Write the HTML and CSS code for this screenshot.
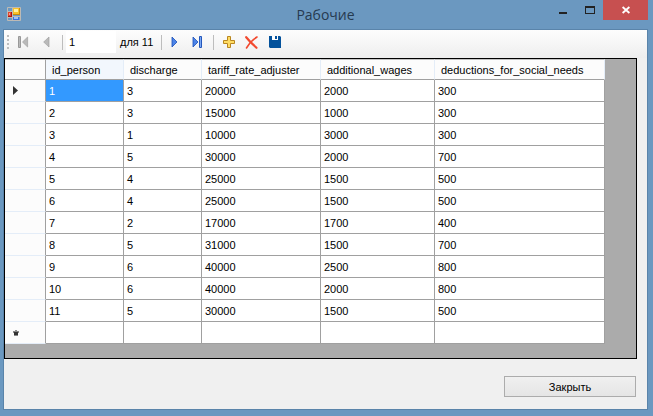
FILE: index.html
```html
<!DOCTYPE html>
<html lang="ru">
<head>
<meta charset="utf-8">
<title>Рабочие</title>
<link rel="stylesheet" href="styles.css">
</head>
<body>
<div class="window">
  <header class="titlebar">
    <svg class="app-icon" width="14" height="14" viewBox="0 0 14 14" aria-hidden="true">
      <path fill="none" stroke="#bdbab5" d="M.5.5h13v13H.5zM5.5 0v14M0 4.5h5M0 10.5h5M5 9.5h9"/>
      <path fill="#a81212" d="M1 5h4v5H1z"/><path fill="#e2452f" d="M1 5h3v4H1z"/><path fill="#f3a090" d="M2 6h1v2H2z"/>
      <path fill="#c98a0c" d="M6 1h7v7H6z"/><path fill="#f9c22a" d="M6 1h6v6H6z"/><path fill="#fff0a0" d="M7 2h4v3H7z"/>
      <path fill="#3a70dc" d="M6 10h6v3H6z"/><path fill="#9cc0fa" d="M7 10h4v2H7z"/>
    </svg>
    <h1 class="title">Рабочие</h1>
    <div class="window-controls">
      <button class="control" type="button" aria-label="Свернуть"><svg width="10" height="8" viewBox="0 0 10 8"><path fill="#222" d="M1 6h8v2H1z"/></svg></button>
      <button class="control" type="button" aria-label="Развернуть"><svg width="10" height="8" viewBox="0 0 10 8"><path fill="#222" fill-rule="evenodd" d="M0 0h10v8H0zM1 2v5h8V2z"/></svg></button>
      <button class="control control-close" type="button" aria-label="Закрыть окно"><svg width="8" height="8" viewBox="0 0 8 8"><path stroke="#fff" stroke-width="1.8" d="M.6 1l6.8 6M7.4 1L.6 7"/></svg></button>
    </div>
  </header>
  <main class="client">
    <div class="toolbar" role="toolbar" aria-label="Навигация">
      <span class="grip"></span>
      <button class="tool" type="button" aria-label="Первая"><svg width="11" height="12" viewBox="0 0 11 12"><path fill="#b9b9b9" stroke="#999" d="M.5.5h2v11h-2z"/><path fill="#b9b9b9" stroke="#a0a0a0" stroke-width=".7" d="M9.6 1v10L4.5 6z"/></svg></button>
      <button class="tool" type="button" aria-label="Предыдущая"><svg width="7" height="12" viewBox="0 0 7 12"><path fill="#b9b9b9" stroke="#a0a0a0" stroke-width=".7" d="M6 1v10L.7 6z"/></svg></button>
      <span class="separator"></span>
      <input class="position" type="text" value="1" aria-label="Текущая запись">
      <span class="count">для 11</span>
      <span class="separator separator-tight"></span>
      <button class="tool" type="button" aria-label="Следующая"><svg width="7" height="12" viewBox="0 0 7 12"><path fill="#4c84e8" stroke="#1b4fb8" stroke-width=".8" d="M1 1v10l5-5z"/></svg></button>
      <button class="tool" type="button" aria-label="Последняя"><svg width="11" height="12" viewBox="0 0 11 12"><path fill="#4c84e8" stroke="#1b4fb8" stroke-width=".8" d="M1 1v10l5-5z"/><path fill="#7aa8f5" stroke="#2457bb" d="M7.5.5h2v11h-2z"/></svg></button>
      <span class="separator"></span>
      <button class="tool" type="button" aria-label="Добавить"><svg width="12" height="12" viewBox="0 0 12 12"><path fill="#ffdc63" stroke="#b9861f" d="M4.5.5h3v4h4v3h-4v4h-3v-4h-4v-3h4z"/></svg></button>
      <button class="tool" type="button" aria-label="Удалить"><svg width="13" height="13" viewBox="0 0 13 13"><path fill="none" stroke="#f24a30" stroke-width="2.2" stroke-linecap="round" d="M1.2 1.2Q5 6 11.5 11.8"/><path fill="none" stroke="#f24a30" stroke-width="1.6" stroke-linecap="round" d="M12 1Q5.500 5 1.500 12"/></svg></button>
      <button class="tool" type="button" aria-label="Сохранить"><svg width="12" height="12" viewBox="0 0 12 12"><path fill="#04529c" d="M0 0h11l1 1v11H1l-1-1z"/><path fill="#fff" d="M3 0h6v4H3z"/><path fill="#04529c" d="M6 0h2v3H6z"/></svg></button>
    </div>
    <div class="grid-panel">
      <table class="grid">
        <colgroup><col class="c-head"><col class="c-id"><col class="c-id"><col class="c-rate"><col class="c-wages"><col class="c-deductions"></colgroup>
        <thead>
          <tr><td></td><th class="current" scope="col">id_person</th><th scope="col">discharge</th><th scope="col">tariff_rate_adjuster</th><th scope="col">additional_wages</th><th scope="col">deductions_for_social_needs</th></tr>
        </thead>
        <tbody>
          <tr><td class="marker"><svg width="5" height="9" viewBox="0 0 5 9"><path fill="#333" d="M0 0l5 4.500L0 9z"/></svg></td><td class="selected">1</td><td>3</td><td>20000</td><td>2000</td><td>300</td></tr>
          <tr><td class="marker"></td><td>2</td><td>3</td><td>15000</td><td>1000</td><td>300</td></tr>
          <tr><td class="marker"></td><td>3</td><td>1</td><td>10000</td><td>3000</td><td>300</td></tr>
          <tr><td class="marker"></td><td>4</td><td>5</td><td>30000</td><td>2000</td><td>700</td></tr>
          <tr><td class="marker"></td><td>5</td><td>4</td><td>25000</td><td>1500</td><td>500</td></tr>
          <tr><td class="marker"></td><td>6</td><td>4</td><td>25000</td><td>1500</td><td>500</td></tr>
          <tr><td class="marker"></td><td>7</td><td>2</td><td>17000</td><td>1700</td><td>400</td></tr>
          <tr><td class="marker"></td><td>8</td><td>5</td><td>31000</td><td>1500</td><td>700</td></tr>
          <tr><td class="marker"></td><td>9</td><td>6</td><td>40000</td><td>2500</td><td>800</td></tr>
          <tr><td class="marker"></td><td>10</td><td>6</td><td>40000</td><td>2000</td><td>800</td></tr>
          <tr><td class="marker"></td><td>11</td><td>5</td><td>30000</td><td>1500</td><td>500</td></tr>
          <tr><td class="marker"><svg width="6" height="6" viewBox="0 0 6 6"><path fill="#888" d="M0 1h6v2H0zM1 5h4v1H1zM2 0h2v1H2z"/><path fill="#333" d="M1 2h4v3H1z"/></svg></td><td></td><td></td><td></td><td></td><td></td></tr>
        </tbody>
      </table>
    </div>
    <footer class="actions"><button class="close-button" type="button">Закрыть</button></footer>
  </main>
</div>
</body>
</html>
```

FILE: styles.css
```css
* {
  box-sizing: border-box;
}

body {
  margin: 0;
  background: #6b98c0;
  color: #000;
  font: 11px/14px "Liberation Sans", Arial, sans-serif;
}

button,
input {
  margin: 0;
  border: 0;
  padding: 0;
  color: inherit;
  font: inherit;
}

svg {
  display: block;
}

.window {
  display: flex;
  flex-direction: column;
  min-height: 100vh;
  padding: 0 5px 6px 3px;
}

.titlebar {
  display: grid;
  grid-template-columns: 1fr auto 1fr;
  height: 29px;
}

.app-icon {
  margin: 7px 0 0 4px;
}

.title {
  margin: 5px 0 0;
  color: #263a50;
  font: 400 14px/20px "Open Sans", "Noto Sans", sans-serif;
}

.window-controls {
  display: flex;
  justify-content: flex-end;
}

.control {
  display: flex;
  align-items: center;
  justify-content: center;
  width: 27px;
  height: 20px;
  background: transparent;
}

.control-close {
  width: 45px;
  background: #c75050;
}

.client {
  display: flex;
  flex: 1;
  flex-direction: column;
  border: 1px solid #5a84aa;
  background: #f0f0f0;
}

.toolbar {
  display: flex;
  align-items: center;
  height: 28px;
  padding: 0 3px 4px;
  background: linear-gradient(#fdfdfd, #eeeeee);
}

.grip {
  width: 2px;
  height: 14px;
  margin-right: 3px;
  background: repeating-linear-gradient(#bdbdbd 0 2px, transparent 2px 4px);
}

.tool {
  display: flex;
  align-items: center;
  justify-content: center;
  width: 23px;
  height: 22px;
  background: transparent;
}

.separator {
  width: 1px;
  height: 15px;
  margin: 0 3px 0 4px;
  background: #bdbdbd;
}

.separator-tight {
  margin: 0 1px 0 0;
}

.position {
  width: 50px;
  height: 22px;
  padding: 0 3px;
  background: #fff;
}

.count {
  width: 45px;
  padding-left: 4px;
  white-space: nowrap;
}

.grid-panel {
  margin-right: 10px;
  border: 1px solid #000;
  padding-bottom: 14px;
  background: #ababab;
}

.grid {
  width: 600px;
  border-spacing: 0;
  table-layout: fixed;
}

.c-head {
  width: 41px;
}

.c-id {
  width: 78px;
}

.c-rate {
  width: 119px;
}

.c-wages {
  width: 114px;
}

.c-deductions {
  width: 170px;
}

.grid td,
.grid th {
  height: 22px;
  border: solid #a0a0a0;
  border-width: 0 1px 1px 0;
  padding: 0 3px;
  background: #fff;
  font-weight: 400;
  text-align: left;
  white-space: nowrap;
}

.grid thead td,
.grid thead th {
  height: 21px;
  border-top: 1px solid #c4c4c4;
  background: #fcfcfc;
}

.grid thead th {
  border-right-color: #e4edf8;
  padding: 0 6px;
}

.grid thead .current {
  background: #f2f7fd;
}

.grid .marker {
  border-bottom-color: #e4edf8;
  padding-left: 8px;
  background: #fcfcfc;
}

.grid .selected {
  background: #3399ff;
  color: #fff;
}

.actions {
  display: flex;
  justify-content: flex-end;
  padding: 17px 11px 12px;
}

.close-button {
  width: 132px;
  height: 21px;
  border: 1px solid #acacac;
  background: linear-gradient(#f0f0f0, #e5e5e5);
}
```
